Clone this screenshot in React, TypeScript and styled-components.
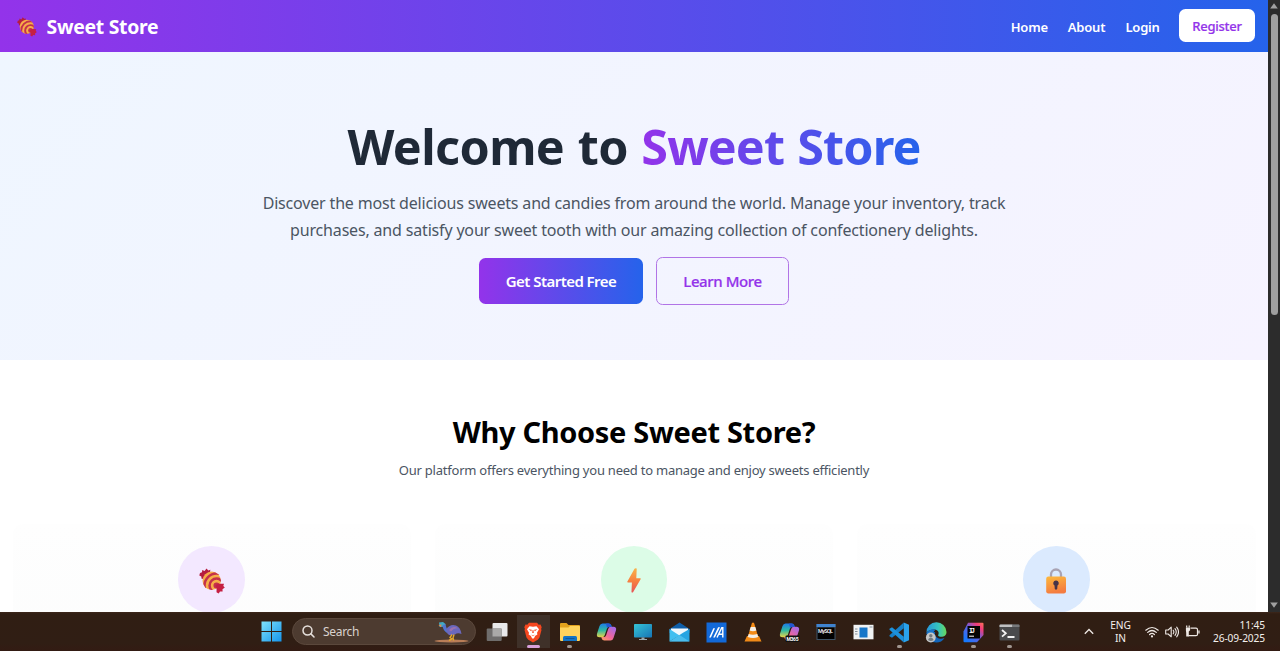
import React from "react";
import styled, { createGlobalStyle, css } from "styled-components";

const GlobalStyle = createGlobalStyle`
  *, *::before, *::after { box-sizing: border-box; }
  html, body { margin: 0; height: 100%; overflow: hidden; }
  body { font-family: "Noto Sans", "Open Sans", sans-serif; background: #fff; }
  h1, h2, p { margin: 0; }
  button { font-family: inherit; padding: 0; border: 0; }
  svg { display: block; flex: none; }
`;

const Screen = styled.div`
  width: 1280px;
  height: 651px;
  display: flex;
  flex-direction: column;
  overflow: hidden;
`;

const Viewport = styled.div`
  height: 612px;
  display: flex;
  overflow: hidden;
`;

const Page = styled.main`
  width: 1268px;
  height: 612px;
  overflow: hidden;
  background: #fff;
`;

const Nav = styled.nav`
  height: 52px;
  padding: 0 13px 0 17px;
  display: flex;
  align-items: center;
  justify-content: space-between;
  background: linear-gradient(90deg, #9333ea, #2563eb);
  color: #fff;
`;

const Brand = styled.div`
  display: flex;
  align-items: center;
  gap: 9.6px;
  padding-top: 1px;
  font-size: 19.4px;
  font-weight: 700;
  line-height: 28px;
  white-space: nowrap;
  letter-spacing: -0.3px;
`;

const NavLinks = styled.div`
  display: flex;
  align-items: center;
  gap: 19.6px;
`;

const NavLink = styled.a<{ $w: number }>`
  width: ${(p) => p.$w}px;
  padding-top: 1px;
  font-size: 13px;
  font-weight: 600;
  line-height: 20px;
  white-space: nowrap;
  letter-spacing: -0.2px;
`;

const RegisterButton = styled.button`
  width: 76px;
  height: 33px;
  margin-bottom: 1px;
  padding-top: 1px;
  border-radius: 6.5px;
  background: #fff;
  color: #9333ea;
  font-size: 13px;
  font-weight: 500;
  letter-spacing: -0.25px;
  -webkit-text-stroke: 0.2px #9333ea;
`;

const Hero = styled.section`
  height: 308px;
  padding-top: 65px;
  display: flex;
  flex-direction: column;
  align-items: center;
  background: linear-gradient(135deg, #eff6ff, #f6f3ff);
`;

const HeroTitle = styled.h1`
  height: 58px;
  font-size: 48.5px;
  font-weight: 700;
  line-height: 58px;
  letter-spacing: -0.6px;
  word-spacing: 1.5px;
  color: #1f2937;
  white-space: nowrap;
`;

const GradientText = styled.span`
  letter-spacing: -0.9px;
  background: linear-gradient(90deg, #9333ea, #2563eb);
  -webkit-background-clip: text;
  background-clip: text;
  color: transparent;
`;

const HeroCopy = styled.p`
  margin-top: 14.5px;
  font-size: 16px;
  line-height: 27.1px;
  letter-spacing: -0.173px;
  text-align: center;
  color: #4b5563;
  white-space: nowrap;
`;

const CopyLine = styled.span`
  display: block;
`;

const Actions = styled.div`
  margin-top: 13px;
  display: flex;
  align-items: center;
  gap: 13px;
`;

const ActionButton = styled.button<{ $primary?: boolean }>`
  font-size: 15px;
  white-space: nowrap;
  border-radius: 6.5px;
  ${(p) =>
    p.$primary
      ? css`
          width: 164px;
          height: 46px;
          font-weight: 600;
          letter-spacing: -0.55px;
          color: #fff;
          background: linear-gradient(90deg, #9333ea, #2563eb);
        `
      : css`
          width: 133px;
          height: 48px;
          font-weight: 500;
          letter-spacing: -0.4px;
          color: #9333ea;
          -webkit-text-stroke: 0.2px #9333ea;
          background: transparent;
          border: 1px solid #b174e6;
        `}
`;

const Features = styled.section`
  padding: 53px 12.5px 0;
  display: flex;
  flex-direction: column;
  align-items: center;
`;

const SectionTitle = styled.h2`
  font-size: 29px;
  font-weight: 700;
  line-height: 38px;
  letter-spacing: -0.32px;
  color: #000;
  white-space: nowrap;
`;

const SectionCopy = styled.p`
  margin-top: 8px;
  font-size: 13px;
  line-height: 22px;
  letter-spacing: -0.23px;
  color: #4b5563;
  white-space: nowrap;
`;

const CardGrid = styled.div`
  width: 100%;
  margin-top: 42.5px;
  display: grid;
  grid-template-columns: repeat(3, 1fr);
  gap: 24px;
`;

const Card = styled.article`
  height: 180px;
  padding-top: 22.5px;
  border-radius: 10px;
  display: flex;
  justify-content: center;
  background: linear-gradient(#fefefe, #fbfcfc);
`;

const Badge = styled.div<{ $color: string }>`
  width: 66.6px;
  height: 66.6px;
  border-radius: 50%;
  display: flex;
  align-items: center;
  justify-content: center;
  padding-top: 3px;
  background: ${(p) => p.$color};
`;

const ScrollTrack = styled.div`
  width: 12px;
  height: 612px;
  padding: 3px 0 4px;
  display: flex;
  flex-direction: column;
  align-items: center;
  background: #2c2c2c;
`;

const ScrollThumb = styled.div`
  width: 7px;
  height: 301px;
  margin: 5px 0 auto;
  border-radius: 4px;
  background: #9f9f9f;
`;

const Taskbar = styled.footer`
  height: 39px;
  padding: 0 15px 0 261px;
  display: flex;
  align-items: center;
  color: #f4f0ed;
  background: linear-gradient(#3d271a, #301e13 2px, #301e14 80%, #331b13);
`;

const SearchBox = styled.div`
  width: 184px;
  height: 27px;
  margin: 0 2.2px 0 10px;
  padding: 0 6px 0 9px;
  display: flex;
  align-items: center;
  border-radius: 14px;
  border: 1px solid #5b483c;
  background: #4d3b30;
  font-size: 12px;
  color: #d9d2cd;
`;

const SearchLabel = styled.span`
  flex: 1;
  padding: 1px 0 0 8px;
  letter-spacing: -0.3px;
  line-height: 16px;
`;

const Slot = styled.div<{ $active?: boolean }>`
  width: 36.66px;
  height: 39px;
  display: grid;
  grid-template-rows: 26px 3px;
  padding-top: 7px;
  justify-items: center;
  align-items: center;
  background: ${(p) =>
    p.$active ? "linear-gradient(#3f3129, #3f3129) center / 33px 33px no-repeat" : "none"};
`;

const Indicator = styled.span<{ $active?: boolean }>`
  width: ${(p) => (p.$active ? 13 : 5)}px;
  height: ${(p) => (p.$active ? 3 : 2.5)}px;
  border-radius: 2px;
  background: ${(p) => (p.$active ? "#d8a0dc" : "#a09690")};
`;

const Tray = styled.div`
  margin-left: auto;
  display: flex;
  align-items: center;
`;

const TrayText = styled.div<{ $w: number; $align: "center" | "right"; $ls: number }>`
  width: ${(p) => p.$w}px;
  text-align: ${(p) => p.$align};
  font-size: 10.2px;
  line-height: 13px;
  letter-spacing: ${(p) => p.$ls}px;
  white-space: nowrap;
`;

const Language = styled.div`
  margin: 0 9.5px 0 12px;
`;

const TrayIcons = styled.div`
  display: flex;
  align-items: center;
  gap: 6px;
  margin-right: 7px;
`;

const Candy = ({ size, id }: { size: number; id: string }) => (
  <svg width={size} height={size} viewBox="0 0 26 26">
    <defs>
      <clipPath id={id}>
        <circle cx="12.7" cy="12.8" r="9.2" />
      </clipPath>
    </defs>
    <path d="M1 5l2-.7.2-2.2 2.4 1L7.500.4l1.800 2 2-.6-.4 5.200-4.700 4-3.600-.2-.3-2.200L.3 7.500z" fill="#b51d3f" />
    <g clipPath={`url(#${id})`}>
      <rect width="26" height="26" fill="#f6ae48" />
      <g fill="none" stroke="#c4314b" strokeWidth="2.500">
        <circle cx="17.500" cy="17.500" r="12" />
        <circle cx="17.500" cy="17.500" r="6.900" />
        <circle cx="17.500" cy="17.500" r="1.800" />
      </g>
    </g>
    <path d="M16.500 17.200l3-1.500 5.500.1-.7 2.300 1.500 1.500-2.300 1.700.1 2.300-2.600-.1-1.300 2-2.200-1.200.1-3.200z" fill="#c51f43" />
  </svg>
);

const Bolt = () => (
  <svg width="14" height="25" viewBox="0 0 14 25">
    <defs>
      <linearGradient id="bolt" x1="0" y1="0" x2="0" y2="1">
        <stop stopColor="#f9b24a" />
        <stop offset=".5" stopColor="#f8823f" />
        <stop offset="1" stopColor="#e65457" />
      </linearGradient>
    </defs>
    <path d="M7.500.8Q8 .2 9 .3q.9.100.7 1L9.300 10.300h3.900q.9.100.4 1L6.200 24q-.5.700-1.300.5-.500-.2-.4-1l.4-9H.9q-.9-.1-.5-1z" fill="url(#bolt)" />
  </svg>
);

const Lock = () => (
  <svg width="22" height="26" viewBox="0 0 22 26">
    <defs>
      <linearGradient id="lock" x1="0" y1="0" x2=".3" y2="1">
        <stop stopColor="#fdb93c" />
        <stop offset="1" stopColor="#f47c40" />
      </linearGradient>
    </defs>
    <path d="M6 11V6.500a5 5 0 0 1 10 0V11" fill="none" stroke="#a9a3b3" strokeWidth="2.300" />
    <rect x="1.200" y="8.500" width="19.800" height="17" rx="2.200" fill="url(#lock)" />
    <path d="M11 12.500a2.700 2.700 0 0 1 1.500 5l-.3 3.500q-1.200 1.400-2.400 0l-.3-3.500a2.700 2.700 0 0 1 1.500-5z" fill="#473448" />
  </svg>
);

const WindowsLogo = () => (
  <svg width="21" height="21" viewBox="0 0 21 21">
    <defs>
      <linearGradient id="win" x1="0" y1="0" x2="1" y2="1">
        <stop stopColor="#7fe3fb" />
        <stop offset="1" stopColor="#1595ed" />
      </linearGradient>
    </defs>
    <path d="M.5.500h9.500V10H.5zM11 .5h9.500V10H11zM.5 11H10v9.500H.5zM11 11h9.500v9.500H11z" fill="url(#win)" />
  </svg>
);

const SearchGlyph = () => (
  <svg width="13" height="13" viewBox="0 0 13 13" fill="none" stroke="#e6e0dc" strokeWidth="1.500" strokeLinecap="round">
    <circle cx="5.500" cy="5.500" r="4.500" />
    <path d="M8.900 8.900L12 12" />
  </svg>
);

const Cassowary = () => (
  <svg width="35" height="22" viewBox="0 0 35 22">
    <ellipse cx="17.500" cy="20" rx="17" ry="1.500" fill="#b97d57" />
    <path d="M5 1.500l4-.5 2.500 2-.8 2.800L5.500 6z" fill="#42a9c4" />
    <path d="M4.500 4l3-.5-.5 2.700z" fill="#ef8646" />
    <path d="M8.500 4.500l3-1.500q.8 5 3 6.500l-1.500 2.500Q9 9.500 8.500 4.500z" fill="#5275d0" />
    <path d="M12 8.500q4-6 10-4 4.500 1.800 5.500 8.500-4-1.500-6.500.5-5 2-7.500-.8z" fill="#6b68bd" />
    <path d="M15 9q4-5 9-1.500-4-.8-7 3z" fill="#9c72ae" />
    <path d="M18 13.500l-2 3 2 1.500-3 1.500M20 13.500l-1 3.500.7 2.500" fill="none" stroke="#e3a72d" strokeWidth="1.400" />
  </svg>
);

const TaskViewIcon = () => (
  <svg width="22" height="20" viewBox="0 0 22 20">
    <rect x="6.500" y="1" width="15" height="13.500" rx="1" fill="#e9e9ea" />
    <rect x=".7" y="6.500" width="15" height="12.500" rx="1" fill="#6f6d6c" />
    <path d="M6.500 6.500h9.200v8H6.500z" fill="#aaa9a8" />
  </svg>
);

const BraveIcon = () => (
  <svg width="18" height="21" viewBox="0 0 18 21">
    <path d="M5 .8h8l1.700 1.900 1.800-.2 1.200 2.800-.6 1.600.4 1.200-2 7.400-1.800 2.300L9 20.500l-4.700-2.700-1.800-2.300-2-7.400L1 6.900.3 5.300l1.200-2.800 1.800.2z" fill="#f5471f" />
    <path d="M5.500 4.200l3.500.6 3.500-.6 2.500 3-2 3.500.4 1.800-2.400 1.600-.4 1.200L9 17l-1.600-1.700-.4-1.200-2.400-1.600.4-1.800-2-3.500z" fill="#fff" />
    <path d="M4.500 7.300l3.300.5-.5 1.500zM13.500 7.300l-3.300.5.5 1.500zM6.800 12.500l2.200 1 2.200-1L9 14.300zM8.600 8h.8l.4 3H8.200z" fill="#f5471f" />
  </svg>
);

const FolderIcon = () => (
  <svg width="22" height="20" viewBox="0 0 22 20">
    <path d="M1 2q0-1 1-1h5.500l2 2H20q1 0 1 1v4H1z" fill="#e3a21d" />
    <path d="M1 5.500h8.500L11 4h9q1 0 1 1v13q0 1-1 1H2q-1 0-1-1z" fill="#ffd35c" />
    <path d="M4 19v-3.500q0-1.500 1.500-1.500h11q1.500 0 1.500 1.500V19z" fill="#1475c5" />
    <path d="M6.500 16.500h9" stroke="#0d579c" strokeWidth="1" />
  </svg>
);

const CopilotIcon = ({ badge, id }: { badge?: boolean; id: string }) => (
  <svg width="21" height="20" viewBox="0 0 21 20">
    <defs>
      <linearGradient id={`${id}a`} x1="0" y1="0" x2="0" y2="1">
        <stop stopColor="#1c7be8" />
        <stop offset=".5" stopColor="#2fb9a2" />
        <stop offset="1" stopColor="#e8d44a" />
      </linearGradient>
      <linearGradient id={`${id}b`} x1=".8" y1="0" x2="0" y2="1">
        <stop stopColor="#a56be8" />
        <stop offset=".55" stopColor="#f0659a" />
        <stop offset="1" stopColor="#ffa55c" />
      </linearGradient>
    </defs>
    <path d="M6.500 1.500h6.200q2 0 2.600 2l.4 1.500h-2.800q-1.500 0-2 1.700L8.800 13q-.7 2.200-2.800 2.200H3.500Q.2 15.200 1 11.700L3.500 4q.8-2.500 3-2.500z" fill={`url(#${id}a)`} />
    <path d="M14.500 18.500H8.300q-2 0-2.600-2L5.300 15h2.800q1.500 0 2-1.700L12.200 7q.7-2.200 2.800-2.200h2.500q3.300 0 2.500 3.500L17.500 16q-.8 2.500-3 2.500z" fill={`url(#${id}b)`} />
    <path d="M10 1.500h2.700q2 0 2.600 2l.4 1.500h-2.800q-1.200 0-1.800 1z" fill="#2456d3" />
    {badge && (
      <>
        <rect x="6.500" y="13.500" width="14" height="6.500" rx="1" fill="#111" />
        <text x="7.500" y="18.700" fontSize="5" fontWeight="700" fill="#fff" textLength="12" fontFamily="Roboto, sans-serif">M365</text>
      </>
    )}
  </svg>
);

const MonitorIcon = () => (
  <svg width="20" height="18" viewBox="0 0 20 18">
    <defs>
      <linearGradient id="mon" x1="0" y1="0" x2="1" y2="1">
        <stop stopColor="#36c4d5" />
        <stop offset="1" stopColor="#1674b5" />
      </linearGradient>
    </defs>
    <rect x="1" y="1" width="18" height="13.500" rx=".8" fill="url(#mon)" />
    <path d="M8.500 14.500h3V16H14v1H6v-1h2.500z" fill="#9aa7ad" />
  </svg>
);

const MailIcon = () => (
  <svg width="21" height="20" viewBox="0 0 21 20">
    <path d="M.5 7L10.500.500l10 6.500v4H.5z" fill="#0f5ea8" />
    <path d="M2 6.500h17V12l-8.500 3L2 12z" fill="#f1f8fd" />
    <path d="M.5 7l10 6.500L.5 19.500z" fill="#42bff0" />
    <path d="M20.500 7v12.500H.5L14 10.800z" fill="#27a4e2" />
    <path d="M.5 19.500l10-6.500 10 6.500z" fill="#60cbf3" opacity=".65" />
  </svg>
);

const AsusIcon = () => (
  <svg width="21" height="21" viewBox="0 0 21 21">
    <rect x=".5" y=".5" width="20" height="20" fill="#1269d9" />
    <path d="M3.200 15.500h1.700L9 6.200H7.300zM7.200 15.500h1.700L14 5.200h-1.900z" fill="#fff" />
    <path d="M11 15.500L15.800 5.800h1v9.700M13.200 12.300h3.600" fill="none" stroke="#fff" strokeWidth="1.400" />
  </svg>
);

const VlcIcon = () => (
  <svg width="18" height="20" viewBox="0 0 18 20">
    <path d="M3 14h12l2.500 5.500H.5z" fill="#f18a18" />
    <path d="M8 .8h2L14.500 16q-5.500 2.500-11 0z" fill="#f58b16" />
    <path d="M6.700 5h4.600l1.100 3.600q-3.400 1.300-6.800 0zM4.700 12q4.300 1.500 8.600 0l.9 3q-5.200 2-10.400 0z" fill="#f4efe8" />
  </svg>
);

const MySqlIcon = () => (
  <svg width="20" height="18" viewBox="0 0 20 18">
    <rect x=".5" y="1" width="19" height="16" fill="#405467" />
    <rect x=".5" y="1" width="19" height="3" fill="#3f83cf" />
    <rect x="1.500" y="4.500" width="17" height="11.500" fill="#020202" />
    <text x="2" y="10" fontSize="5.500" fontWeight="500" fill="#fff" textLength="15" fontFamily="Roboto, sans-serif">MySQL</text>
  </svg>
);

const SnapWindowIcon = () => (
  <svg width="21" height="16" viewBox="0 0 21 16">
    <rect x=".5" y=".8" width="20" height="14.500" fill="#f0f2f3" />
    <rect x="6.500" y="3.500" width="8" height="10" fill="#1676c9" />
    <path d="M2 5h2.500M2 7.500h2.500M2 10h2.500M16.500 3h3" stroke="#87919a" strokeWidth="1" />
  </svg>
);

const VsCodeIcon = () => (
  <svg width="21" height="21" viewBox="0 0 21 21">
    <path d="M14.800.5L20 2.800v15.400l-5.200 2.300z" fill="#2aa2ec" />
    <path d="M14.800.5v5.700L3 15.800.500 14.200v-1z" fill="#1680c9" />
    <path d="M14.800 20.500v-5.700L3 5.200.500 6.800v1z" fill="#1c91dc" />
  </svg>
);

const EdgeIcon = () => (
  <svg width="22" height="21" viewBox="0 0 22 21">
    <defs>
      <linearGradient id="edg" x1="0" y1=".5" x2="1" y2=".5">
        <stop stopColor="#2796dc" />
        <stop offset=".6" stopColor="#36c5bd" />
        <stop offset="1" stopColor="#69d95a" />
      </linearGradient>
    </defs>
    <path d="M1.500 10.500a10 10 0 0 0 10 10q5 0 8-4.500-4.500 1.800-7.500-.5-3-2.300-1.800-5.500z" fill="#1265ba" />
    <path d="M1.500 10.500a10 10 0 0 1 20-.5c0 4-3.500 5.200-6.500 4.700-2-.4-2.300-1.400-1.500-2.400 1.500-4.800-6.500-6.800-12-1.800z" fill="url(#edg)" />
    <path d="M1.500 11q4-5 9-3.300-3.500 2.800-1.500 7.300l-6 1.500z" fill="#1976cc" />
    <circle cx="5.800" cy="15.500" r="4.900" fill="#c5c7c8" />
    <circle cx="5.800" cy="13.800" r="1.700" fill="#747b80" />
    <path d="M3 18q.5-2.200 2.800-2.200T8.600 18Q5.800 20 3 18z" fill="#747b80" />
  </svg>
);

const IntelliJIcon = () => (
  <svg width="21" height="21" viewBox="0 0 21 21">
    <defs>
      <linearGradient id="ij" x1="0" y1="1" x2="1" y2="0">
        <stop offset=".1" stopColor="#147aff" />
        <stop offset=".5" stopColor="#6160e0" />
        <stop offset=".8" stopColor="#f43d78" />
        <stop offset="1" stopColor="#fb7657" />
      </linearGradient>
    </defs>
    <path d="M5 .8h14.500q1 0 1 1V13L14 20.200H1.500q-1 0-1-1V9.500z" fill="url(#ij)" />
    <rect x="4.500" y="4" width="12.500" height="12.500" fill="#050505" />
    <text x="6" y="10.500" fontSize="6.500" fontWeight="700" fill="#fff" fontFamily="Liberation Mono, monospace" textLength="6">IJ</text>
    <path d="M6 14.200h5" stroke="#fff" strokeWidth="1" />
  </svg>
);

const TerminalIcon = () => (
  <svg width="21" height="17" viewBox="0 0 21 17">
    <rect x=".5" y=".5" width="20" height="16" rx="1" fill="#4a4b4d" />
    <path d="M.5 1.500q0-1 1-1h12V3H.5z" fill="#bfc0c1" />
    <path d="M13.500.500h6q1 0 1 1V3h-7z" fill="#77797b" />
    <path d="M3 6l3.800 3.300L3 12.700M8.500 13h7" fill="none" stroke="#f2f2f2" strokeWidth="1.800" />
  </svg>
);

const ChevronUp = () => (
  <svg width="10" height="7" viewBox="0 0 10 7" fill="none" stroke="#eee8e4" strokeWidth="1.300">
    <path d="M.8 5.800L5 1.500l4.200 4.300" />
  </svg>
);

const WifiIcon = () => (
  <svg width="14" height="12" viewBox="0 0 14 12" fill="none" stroke="#eee8e4" strokeWidth="1.200" strokeLinecap="round">
    <path d="M.8 4.200q6.200-5.400 12.400 0M2.700 6.400q4.300-3.800 8.600 0M4.600 8.500q2.400-2.200 4.800 0" />
    <circle cx="7" cy="10.400" r="1.100" fill="#eee8e4" stroke="none" />
  </svg>
);

const SpeakerIcon = () => (
  <svg width="14" height="12" viewBox="0 0 14 12" fill="none" stroke="#eee8e4" strokeWidth="1.100" strokeLinecap="round" strokeLinejoin="round">
    <path d="M.7 4h2.500l3-2.800v9.600l-3-2.800H.7zM8.200 4.200q1.300 1.800 0 3.600M10 2.700q2.500 3.300 0 6.600M11.700 1.200q3.600 4.800 0 9.600" />
  </svg>
);

const BatteryIcon = () => (
  <svg width="15" height="13" viewBox="0 0 15 13" fill="none" stroke="#eee8e4" strokeWidth="1.200">
    <path d="M5.500 3.200H11q1.500 0 1.500 1.500v4.500q0 1.500-1.500 1.500H3.200M14 5.500v3" />
    <path d="M1.700.5v2M4.200.5v2" />
    <path d="M.9 2.500h4.200v2.700L3.800 6.500v4.900H1.200V8L.9 5.200z" fill="#eee8e4" stroke="none" />
  </svg>
);

const apps: { icon: React.ReactNode; running?: boolean; active?: boolean }[] = [
  { icon: <TaskViewIcon /> },
  { icon: <BraveIcon />, active: true },
  { icon: <FolderIcon />, running: true },
  { icon: <CopilotIcon id="cp" /> },
  { icon: <MonitorIcon /> },
  { icon: <MailIcon /> },
  { icon: <AsusIcon /> },
  { icon: <VlcIcon /> },
  { icon: <CopilotIcon id="cm" badge /> },
  { icon: <MySqlIcon /> },
  { icon: <SnapWindowIcon /> },
  { icon: <VsCodeIcon />, running: true },
  { icon: <EdgeIcon /> },
  { icon: <IntelliJIcon />, running: true },
  { icon: <TerminalIcon />, running: true },
];

export default function App() {
  return (
    <Screen>
      <GlobalStyle />
      <Viewport>
        <Page>
          <Nav>
            <Brand>
              <Candy size={20} id="candyBrand" />
              Sweet Store
            </Brand>
            <NavLinks>
              <NavLink $w={37.5}>Home</NavLink>
              <NavLink $w={38}>About</NavLink>
              <NavLink $w={34}>Login</NavLink>
              <RegisterButton>Register</RegisterButton>
            </NavLinks>
          </Nav>
          <Hero>
            <HeroTitle>
              Welcome to <GradientText>Sweet Store</GradientText>
            </HeroTitle>
            <HeroCopy>
              <CopyLine>Discover the most delicious sweets and candies from around the world. Manage your inventory, track</CopyLine>
              <CopyLine>purchases, and satisfy your sweet tooth with our amazing collection of confectionery delights.</CopyLine>
            </HeroCopy>
            <Actions>
              <ActionButton $primary>Get Started Free</ActionButton>
              <ActionButton>Learn More</ActionButton>
            </Actions>
          </Hero>
          <Features>
            <SectionTitle>Why Choose Sweet Store?</SectionTitle>
            <SectionCopy>Our platform offers everything you need to manage and enjoy sweets efficiently</SectionCopy>
            <CardGrid>
              <Card>
                <Badge $color="#f3e8ff"><Candy size={26} id="candyCard" /></Badge>
              </Card>
              <Card>
                <Badge $color="#dcfce7"><Bolt /></Badge>
              </Card>
              <Card>
                <Badge $color="#dbeafe"><Lock /></Badge>
              </Card>
            </CardGrid>
          </Features>
        </Page>
        <ScrollTrack>
          <svg width="8" height="6" viewBox="0 0 8 6"><path d="M4 .3L7.800 5.500H.2z" fill="#a0a0a0" /></svg>
          <ScrollThumb />
          <svg width="8" height="6" viewBox="0 0 8 6"><path d="M4 5.700L7.800.500H.2z" fill="#a0a0a0" /></svg>
        </ScrollTrack>
      </Viewport>
      <Taskbar>
        <WindowsLogo />
        <SearchBox>
          <SearchGlyph />
          <SearchLabel>Search</SearchLabel>
          <Cassowary />
        </SearchBox>
        {apps.map((app, i) => (
          <Slot key={i} $active={app.active}>
            {app.icon}
            {(app.running || app.active) && <Indicator $active={app.active} />}
          </Slot>
        ))}
        <Tray>
          <ChevronUp />
          <Language>
            <TrayText $w={30} $align="center" $ls={-0.1}>ENG<br />IN</TrayText>
          </Language>
          <TrayIcons>
            <WifiIcon />
            <SpeakerIcon />
            <BatteryIcon />
          </TrayIcons>
          <TrayText $w={58} $align="right" $ls={-0.12}>11:45<br />26-09-2025</TrayText>
        </Tray>
      </Taskbar>
    </Screen>
  );
}
